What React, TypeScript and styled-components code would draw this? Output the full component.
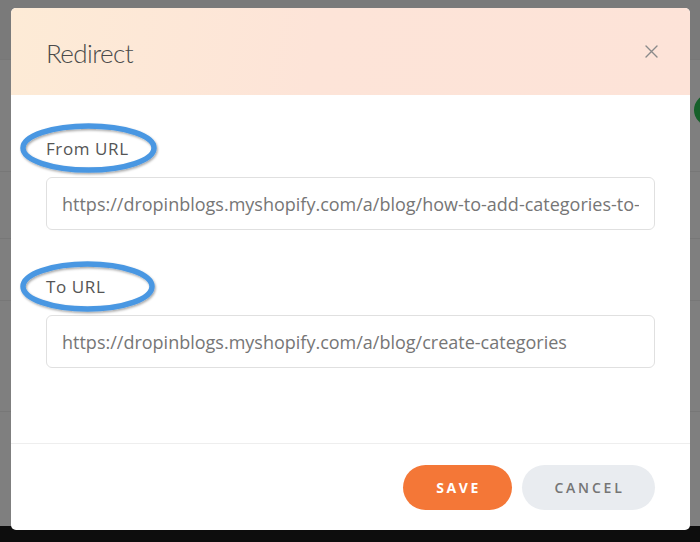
import React from "react";
import styled, { createGlobalStyle } from "styled-components";

const Global = createGlobalStyle`
  html, body { margin: 0; padding: 0; }
  body { font-family: "Open Sans", "Liberation Sans", sans-serif; background: #0d0d0d; }
  * { box-sizing: border-box; }
`;

const Page = styled.div`
  position: relative;
  width: 700px;
  height: 542px;
  overflow: hidden;
  background: #0d0d0d;
`;

const Backdrop = styled.div`
  height: 526px;
  background: #7f7f7f;
  display: flex;
  flex-direction: column;
`;

const BgRow = styled.div<{ $h: number; $tone?: string }>`
  height: ${(p) => p.$h}px;
  flex-shrink: 0;
  border-bottom: 1px solid #777777;
  background: ${(p) => p.$tone || "transparent"};
`;

const GreenDot = styled.div`
  position: absolute;
  left: 694px;
  top: 94px;
  width: 32px;
  height: 32px;
  border-radius: 50%;
  background: #16602a;
`;

const Modal = styled.div`
  position: absolute;
  left: 11px;
  top: 8px;
  width: 679px;
  height: 522px;
  background: #ffffff;
  border-radius: 5px;
  display: flex;
  flex-direction: column;
  overflow: hidden;
`;

const Header = styled.div`
  height: 87px;
  flex-shrink: 0;
  display: flex;
  align-items: center;
  justify-content: space-between;
  padding: 0 32px 0 35px;
  background: linear-gradient(100deg, #fdebd6 0%, #fde4d8 45%, #fde3d8 100%);
`;

const Title = styled.h2`
  margin: 0;
  font-family: "Lato", "Open Sans", sans-serif;
  font-weight: 300;
  font-size: 26px;
  letter-spacing: -0.6px;
  color: #4a4a4a;
  line-height: 1;
  padding-top: 2px;
`;

const CloseButton = styled.button`
  border: none;
  background: transparent;
  padding: 0;
  width: 14px;
  height: 14px;
  display: flex;
  align-items: center;
  justify-content: center;
  cursor: pointer;
`;

const Body = styled.div`
  flex: 1;
  padding: 42px 35px 0 35px;
  display: flex;
  flex-direction: column;
`;

const Field = styled.div<{ $gap?: number }>`
  display: flex;
  flex-direction: column;
  margin-bottom: ${(p) => p.$gap ?? 0}px;
`;

const LabelWrap = styled.div`
  position: relative;
  align-self: flex-start;
  margin-bottom: 16px;
`;

const Label = styled.label`
  display: block;
  font-family: "Open Sans", sans-serif;
  font-size: 17px;
  letter-spacing: 0.6px;
  line-height: 24px;
  color: #555555;
`;

const Ellipse = styled.svg`
  position: absolute;
  left: -26px;
  top: -14px;
  overflow: visible;
  pointer-events: none;
`;

const UrlInput = styled.input`
  width: 100%;
  height: 53px;
  border: 1px solid #e0e0e0;
  border-radius: 6px;
  padding: 0 15px;
  font-family: "Open Sans", sans-serif;
  font-size: 18px;
  color: #767676;
  background: #fff;
  outline: none;
`;

const Footer = styled.div`
  height: 87px;
  flex-shrink: 0;
  border-top: 1px solid #eeeeee;
  display: flex;
  align-items: center;
  justify-content: flex-end;
  gap: 10px;
  padding: 0 35px 0 0;
`;

const Button = styled.button<{ $primary?: boolean; $w: number }>`
  width: ${(p) => p.$w}px;
  height: 45px;
  border: none;
  border-radius: 23px;
  font-family: "Open Sans", sans-serif;
  font-size: 14px;
  font-weight: ${(p) => (p.$primary ? 700 : 600)};
  letter-spacing: ${(p) => (p.$primary ? "2.6px" : "2.8px")};
  text-transform: uppercase;
  color: ${(p) => (p.$primary ? "#ffffff" : "#757575")};
  background: ${(p) => (p.$primary ? "#f47737" : "#e9ecf0")};
  cursor: pointer;
  padding: 0 0 0 2px;
`;

const Annotation: React.FC<{ w: number; h: number }> = ({ w, h }) => (
  <Ellipse width={w} height={h} viewBox={`0 0 ${w} ${h}`}>
    <defs>
      <filter id={`sh${w}`} x="-10%" y="-20%" width="120%" height="140%">
        <feDropShadow dx="1" dy="1.5" stdDeviation="1" floodColor="#000" floodOpacity="0.35" />
      </filter>
    </defs>
    <ellipse
      cx={w / 2}
      cy={h / 2}
      rx={w / 2 - 3}
      ry={h / 2 - 3}
      fill="none"
      stroke="#4a97e2"
      strokeWidth="5.5"
      filter={`url(#sh${w})`}
    />
  </Ellipse>
);

export default function App() {
  return (
    <Page>
      <Global />
      <Backdrop>
        <BgRow $h={60} $tone="#7a7a7a" />
        <BgRow $h={112} />
        <BgRow $h={67} />
        <BgRow $h={62} />
        <BgRow $h={111} />
      </Backdrop>
      <GreenDot />
      <Modal>
        <Header>
          <Title>Redirect</Title>
          <CloseButton aria-label="Close">
            <svg width="13" height="13" viewBox="0 0 13 13">
              <path d="M1 1L12 12M12 1L1 12" stroke="#8a8a8a" strokeWidth="1.4" strokeLinecap="round" />
            </svg>
          </CloseButton>
        </Header>
        <Body>
          <Field $gap={45}>
            <LabelWrap>
              <Label>From URL</Label>
              <Annotation w={137} h={50} />
            </LabelWrap>
            <UrlInput
              readOnly
              defaultValue="https://dropinblogs.myshopify.com/a/blog/how-to-add-categories-to-your-blog"
            />
          </Field>
          <Field>
            <LabelWrap>
              <Label>To URL</Label>
              <Annotation w={135} h={51} />
            </LabelWrap>
            <UrlInput readOnly defaultValue="https://dropinblogs.myshopify.com/a/blog/create-categories" />
          </Field>
        </Body>
        <Footer>
          <Button $primary $w={109}>Save</Button>
          <Button $w={133}>Cancel</Button>
        </Footer>
      </Modal>
    </Page>
  );
}
